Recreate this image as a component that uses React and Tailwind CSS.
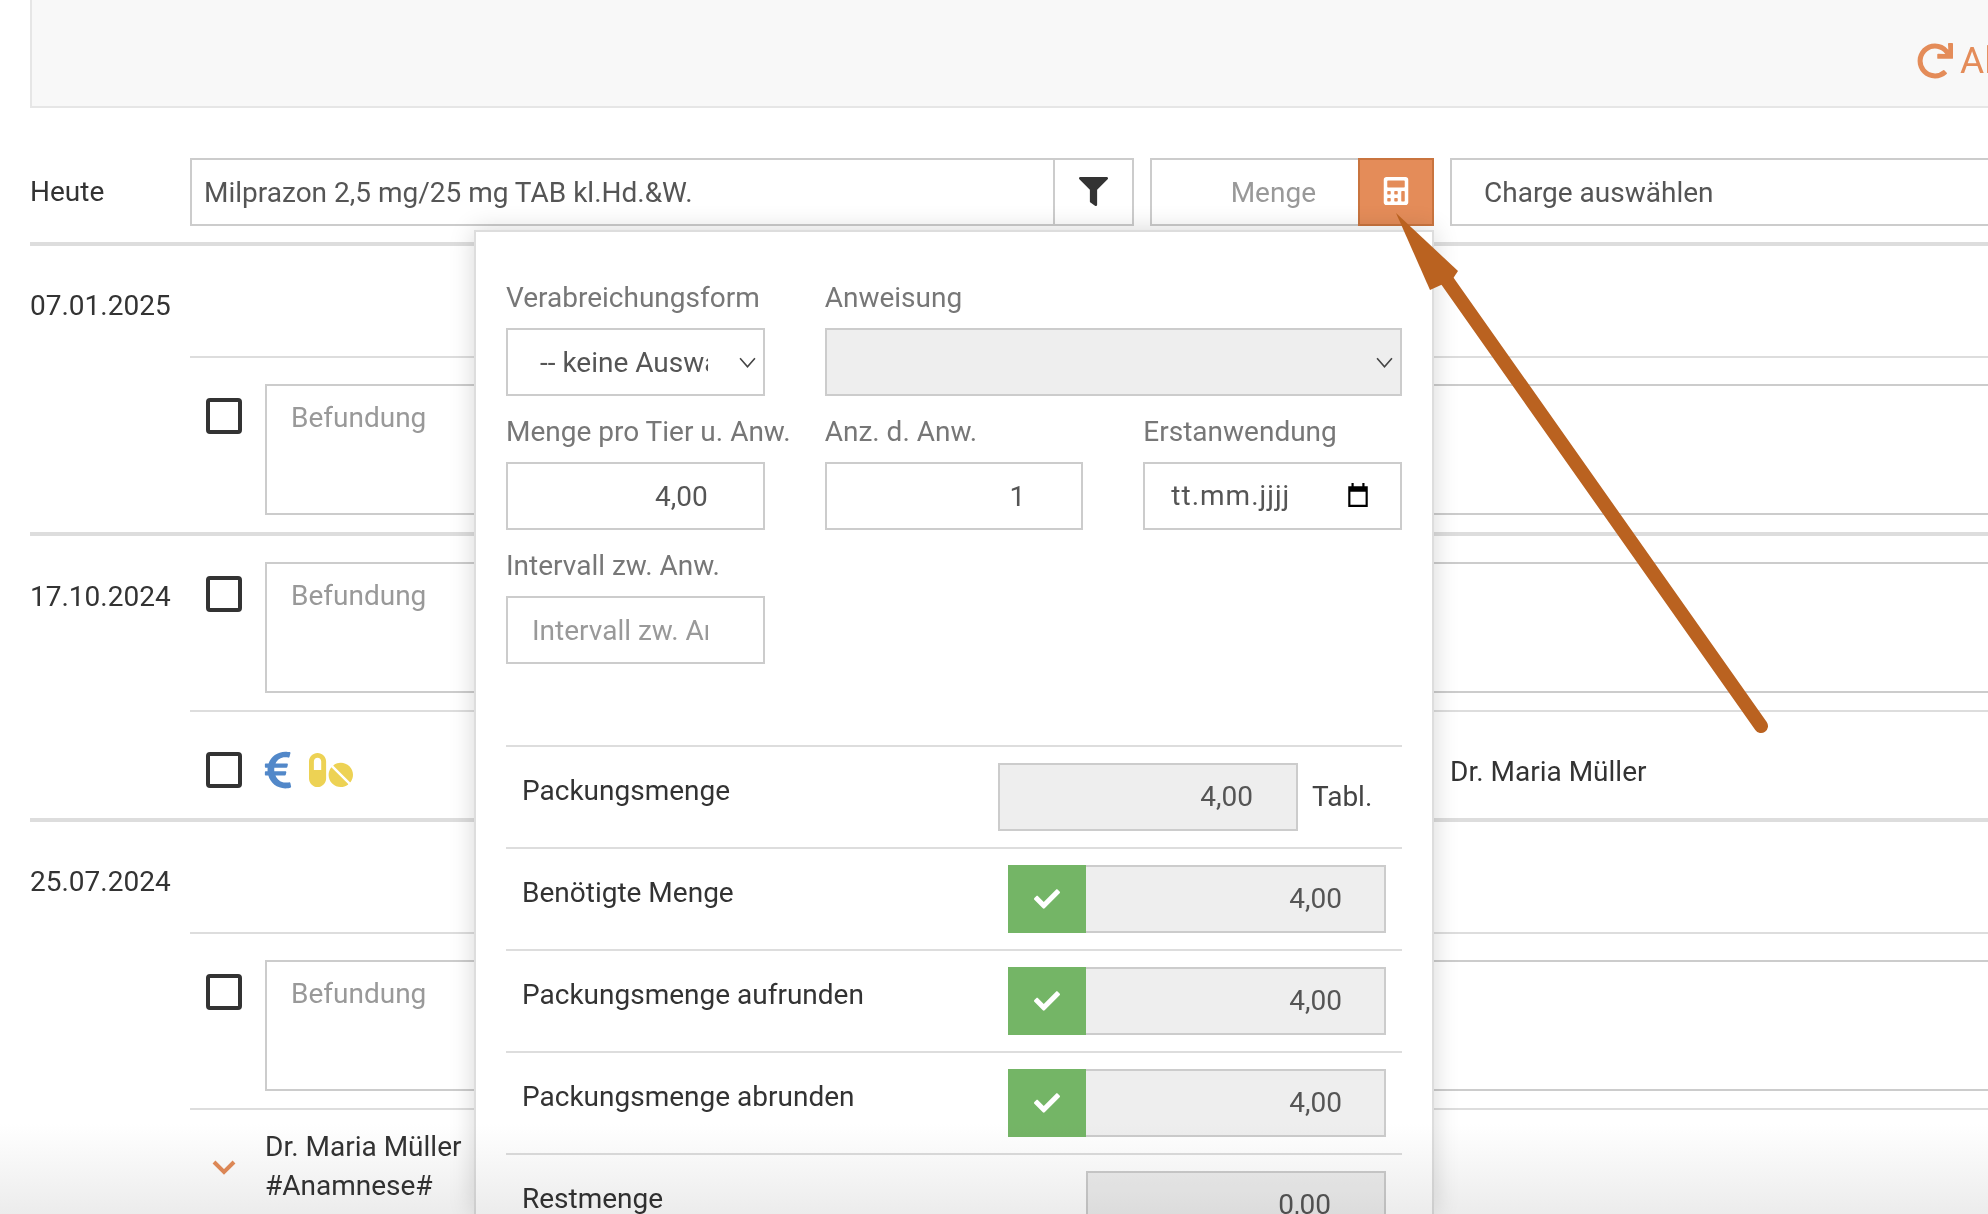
import { FaCalculator, FaCheck, FaEuroSign, FaFilter, FaPills, FaRedo } from 'react-icons/fa';

const Chevron = ({ className }) => (
  <svg viewBox="0 0 16 10" fill="none" stroke="#444" strokeWidth="1.5" className={className}>
    <path d="M1 1l7 8 7-8" />
  </svg>
);

const Checkbox = () => (
  <div className="w-9 h-9 shrink-0 rounded-[4px] border-4 border-[#333]" />
);

const BefundungRow = () => (
  <div className="flex pl-4 pt-[26px] pb-[17px] border-b-2 border-[#ddd]">
    <div className="mt-[14px] w-[59px] shrink-0"><Checkbox /></div>
    <div className="flex-1 h-[131px] px-[24px] py-[15px] border-2 border-r-0 border-[#ccc] leading-[34px] text-[#999]">Befundung</div>
  </div>
);

const Field = ({ label, children, className = '' }) => (
  <div className={className}>
    <div className="h-[34px] pt-[1px] mb-[14px] text-[28px] leading-[34px] text-[#777] whitespace-nowrap">{label}</div>
    {children}
  </div>
);

const inputClass = 'w-full h-[68px] border-2 border-[#ccc] outline-none text-[28px] text-[#555] bg-white';

const CalcRow = ({ label, children }) => (
  <div className="flex justify-between pl-4 pr-4 pt-4 pb-4 h-[102px] border-t-2 border-[#ddd]">
    <div className="mt-[11px] text-[28px] leading-[34px] text-[#333]">{label}</div>
    {children}
  </div>
);

const GrayValue = ({ value, className = '' }) => (
  <div className={`h-[68px] flex items-center justify-end border-2 border-[#ccc] bg-[#eee] text-[28px] text-[#555] ${className}`}>
    {value}
  </div>
);

const CheckedValue = ({ value }) => (
  <div className="flex w-[378px]">
    <div className="w-[78px] h-[68px] flex items-center justify-center bg-[#74b566] text-white text-[26px]">
      <FaCheck />
    </div>
    <GrayValue value={value} className="flex-1 border-l-0 pr-[42px]" />
  </div>
);

const CalculatorPopover = () => (
  <div className="absolute left-[474px] top-[230px] bottom-0 w-[960px] bg-white border-2 border-b-0 border-[#ddd] shadow-[0_0_24px_rgba(0,0,0,0.16)] px-[30px] pt-[48px] z-10">
    <div className="grid grid-cols-3 gap-x-[60px] gap-y-[18px]">
      <Field label="Verabreichungsform">
        <div className="relative w-full h-[68px] border-2 border-[#ccc] flex items-center pl-[32px] pt-[2px] text-[28px] text-[#555]">
          <span className="block w-[168px] overflow-hidden whitespace-nowrap">-- keine Auswahl</span>
          <Chevron className="absolute right-[7px] top-[27px] w-[17px] h-[11px]" />
        </div>
      </Field>
      <Field label="Anweisung" className="col-span-2">
        <div className="relative h-[68px] border-2 border-[#ccc] bg-[#eee]">
          <Chevron className="absolute right-[7px] top-[27px] w-[17px] h-[11px]" />
        </div>
      </Field>
      <Field label="Menge pro Tier u. Anw.">
        <input readOnly value="4,00" className={`${inputClass} text-right pr-[55px]`} />
      </Field>
      <Field label="Anz. d. Anw.">
        <input readOnly value="1" className={`${inputClass} text-right pr-[56px]`} />
      </Field>
      <Field label="Erstanwendung">
        <div className="relative h-[68px] border-2 border-[#ccc] flex items-center pl-[26px] text-[28px] tracking-[1px] text-[#555]">
          tt.mm.jjjj
          <svg viewBox="0 0 24 24" className="absolute right-[29px] top-[18px] w-[26px] h-[26px]" fill="#000">
            <path d="M6 1h2v3h8V1h2v3h3v19H3V4h3V1zm-1 8v12h14V9H5z" />
          </svg>
        </div>
      </Field>
      <Field label="Intervall zw. Anw.">
        <input readOnly placeholder="Intervall zw. Anw." className={`${inputClass} pl-[24px] pr-[55px] placeholder:text-[#999]`} />
      </Field>
    </div>

    <div className="mt-[81px]">
      <CalcRow label="Packungsmenge">
        <div className="flex w-[388px]">
          <GrayValue value="4,00" className="w-[300px] pr-[43px]" />
          <div className="ml-[14px] text-[28px] leading-[68px] text-[#444]">Tabl.</div>
        </div>
      </CalcRow>
      <CalcRow label="Benötigte Menge"><CheckedValue value="4,00" /></CalcRow>
      <CalcRow label="Packungsmenge aufrunden"><CheckedValue value="4,00" /></CalcRow>
      <CalcRow label="Packungsmenge abrunden"><CheckedValue value="4,00" /></CalcRow>
      <CalcRow label="Restmenge"><GrayValue value="0,00" className="w-[300px] pr-[53px]" /></CalcRow>
    </div>
  </div>
);

const App = () => {
  return (
    <div className="relative w-[1988px] h-[1214px] overflow-hidden bg-white font-['Roboto',sans-serif] text-[28px] text-[#333]">
      <div className="ml-[30px] h-[108px] pt-[16px] flex justify-end items-center bg-[#f8f8f8] border-l-2 border-b-2 border-[#e6e6e6] overflow-hidden">
        <div className="flex items-center gap-[7px] w-[71px] shrink-0 text-[#e48c59] text-[37px] whitespace-nowrap">
          <FaRedo className="shrink-0 text-[36px]" />
          <span>Alle</span>
        </div>
      </div>

      <div className="ml-[30px] mt-[50px] h-[68px] flex">
        <div className="w-[160px] leading-[68px]">Heute</div>
        <div className="w-[865px] flex items-center pl-[12px] pt-[2px] border-2 border-[#ccc] text-[#555]">
          Milprazon 2,5 mg/25 mg TAB kl.Hd.&amp;W.
        </div>
        <div className="w-[79px] flex items-center justify-center pb-[2px] border-2 border-l-0 border-[#ccc] text-[#333] text-[29px]">
          <FaFilter />
        </div>
        <div className="ml-[16px] w-[208px] flex items-center justify-end pr-[42px] pt-[2px] border-2 border-r-0 border-[#ccc] text-[#999]">
          Menge
        </div>
        <div className="w-[76px] flex items-center justify-center pb-[2px] bg-[#e48c59] border-2 border-[#c9743f] text-white text-[28px]">
          <FaCalculator />
        </div>
        <div className="ml-[16px] flex-1 flex items-center pl-[32px] pt-[2px] border-2 border-r-0 border-[#ccc] text-[#555]">
          Charge auswählen
        </div>
      </div>

      <div className="ml-[30px] mt-[16px] border-t-4 border-[#ddd] flex">
        <div className="w-[160px] shrink-0 pt-[43px] leading-[34px]">07.01.2025</div>
        <div className="flex-1">
          <div className="h-[112px] border-b-2 border-[#ddd]" />
          <BefundungRow />
        </div>
      </div>

      <div className="ml-[30px] border-t-4 border-[#ddd] -mt-[2px] flex">
        <div className="w-[160px] shrink-0 pt-[44px] leading-[34px]">17.10.2024</div>
        <div className="flex-1">
          <BefundungRow />
          <div className="h-[106px] flex items-start pt-[40px] pl-4">
            <Checkbox />
            <FaEuroSign className="ml-[15px] text-[#5288c9] text-[42px] -mt-[3px]" />
            <FaPills className="ml-[10px] text-[#edd254] text-[44px] -mt-[4px]" />
            <div className="ml-auto w-[538px] leading-[34px] pt-[3px]">Dr. Maria Müller</div>
          </div>
        </div>
      </div>

      <div className="ml-[30px] border-t-4 border-[#ddd] flex">
        <div className="w-[160px] shrink-0 pt-[43px] leading-[34px]">25.07.2024</div>
        <div className="flex-1">
          <div className="h-[112px] border-b-2 border-[#ddd]" />
          <BefundungRow />
          <div className="flex items-center pl-[22px] pt-[17px]">
            <svg viewBox="0 0 24 15" fill="none" stroke="#e48c59" strokeWidth="4" className="w-[24px] h-[15px] shrink-0 mt-[2px]">
              <path d="M2 2l10 10L22 2" />
            </svg>
            <div className="ml-[29px] leading-[39px]">
              <div>Dr. Maria Müller</div>
              <div>#Anamnese#</div>
            </div>
          </div>
        </div>
      </div>

      <CalculatorPopover />

      <div className="absolute left-0 right-0 bottom-0 h-[90px] bg-gradient-to-b from-white to-[#ececec] mix-blend-multiply z-20" />

      <svg className="absolute left-0 top-0 w-[1988px] h-[1214px] z-30 pointer-events-none" viewBox="0 0 1988 1214" fill="none">
        <line x1="1761" y1="726" x2="1441" y2="272" stroke="#ba6220" strokeWidth="14" strokeLinecap="round" />
        <path d="M1396 213L1458 271L1452 280L1430 290Z" fill="#ba6220" />
      </svg>
    </div>
  );
};

export default App;
